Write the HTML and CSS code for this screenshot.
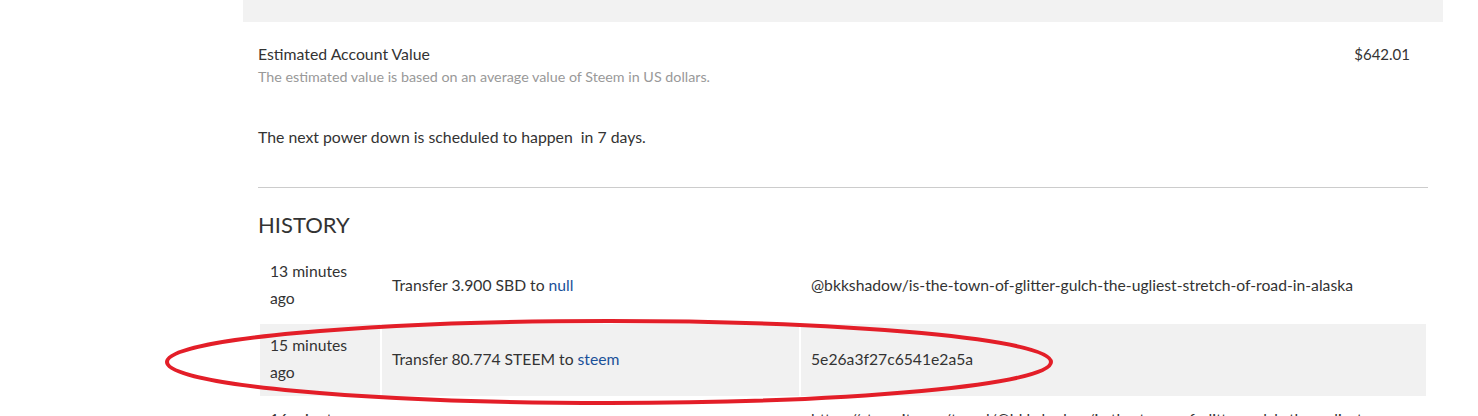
FILE: index.html
```html
<!DOCTYPE html>
<html lang="en">
<head>
    <meta charset="UTF-8">
    <title>Wallet</title>
    <link rel="stylesheet" href="styles.css">
</head>
<body>
    <div class="page">
        <div class="wallet">
            <div class="top-band"></div>
            <div class="content">
                <div class="value-row">
                    <div>
                        <div class="value-label">Estimated Account Value</div>
                        <div class="value-note">The estimated value is based on an average value of Steem in US dollars.</div>
                    </div>
                    <div class="value-amount">$642.01</div>
                </div>
                <p class="power-down">The next power down is scheduled to happen&nbsp; in 7 days.</p>
                <hr class="divider">
                <h4 class="history-title">HISTORY</h4>
                <table class="history">
                    <tbody>
                        <tr>
                            <td class="col-time">13 minutes ago</td>
                            <td class="col-op">Transfer 3.900 SBD to <a href="#">null</a></td>
                            <td class="col-memo">@bkkshadow/is-the-town-of-glitter-gulch-the-ugliest-stretch-of-road-in-alaska</td>
                        </tr>
                        <tr>
                            <td class="col-time">15 minutes ago</td>
                            <td class="col-op">Transfer 80.774 STEEM to <a href="#">steem</a></td>
                            <td class="col-memo">5e26a3f27c6541e2a5a</td>
                        </tr>
                        <tr>
                            <td class="col-time">16 minutes ago</td>
                            <td class="col-op">Transfer 3.900 SBD to <a href="#">null</a></td>
                            <td class="col-memo">https://steemit.com/travel/@bkkshadow/is-the-town-of-glitter-gulch-the-ugliest-stretch-of-road-in-alaska</td>
                        </tr>
                    </tbody>
                </table>
            </div>
        </div>
        <svg class="marker" width="1478" height="416" viewBox="0 0 1478 416">
            <ellipse cx="609" cy="362" rx="442" ry="41" fill="none" stroke="#e31e28" stroke-width="4"/>
        </svg>
    </div>
</body>
</html>
```

FILE: styles.css
```css
body {
    margin: 0;
    background: #fff;
    color: #333;
    font-family: "Lato", "Open Sans", sans-serif;
}
.page {
    position: relative;
    height: 416px;
    overflow: hidden;
}
.wallet {
    margin-left: 243px;
    width: 1200px;
}
.top-band {
    height: 22px;
    background: #f2f2f2;
}
.content {
    padding: 0 15px;
}
.value-row {
    display: flex;
    justify-content: space-between;
    padding-top: 21px;
}
.value-label {
    font-size: 15.8px;
    line-height: 22px;
}
.value-note {
    font-size: 14.3px;
    line-height: 24px;
    color: #999;
}
.value-amount {
    font-size: 15px;
    line-height: 22px;
    padding-right: 18px;
}
.power-down {
    margin: 35px 0 0;
    font-size: 15.8px;
    line-height: 26px;
}
.divider {
    margin: 37px 0 0;
    border: 0;
    border-top: 1px solid #ccc;
}
.history-title {
    margin: 22px 0 0;
    font-size: 22px;
    font-weight: normal;
    line-height: 30px;
}
.history {
    margin-top: 8px;
    width: 1170px;
    border-collapse: separate;
    border-spacing: 2px;
    font-size: 15.7px;
    line-height: 27px;
}
.history td {
    padding: 8px 10px 10px;
    vertical-align: middle;
}
.history tr:nth-child(even) td {
    background: #f1f1f1;
}
.col-time {
    width: 100px;
}
.col-op {
    width: 397px;
}
.history a {
    color: #1a5099;
    text-decoration: none;
}
.marker {
    position: absolute;
    left: 0;
    top: 0;
    pointer-events: none;
}
```
